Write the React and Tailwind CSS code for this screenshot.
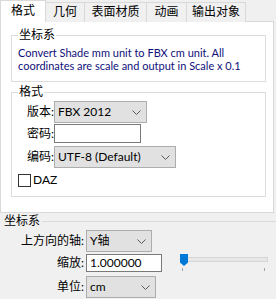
import React from 'react'

function Chevron() {
  return (
    <svg width="9" height="5" viewBox="0 0 9 5" className="shrink-0">
      <path d="M0.5 0.5 L4.5 4.5 L8.5 0.5" fill="none" stroke="#5a5a5a" strokeWidth="1" />
    </svg>
  )
}

function Select({ value, className }) {
  return (
    <div className={`flex items-center justify-between bg-[#e1e1e1] border border-[#adadad] pl-[3px] pr-[5px] ${className}`}>
      <span>{value}</span>
      <Chevron />
    </div>
  )
}

function Slider() {
  return (
    <div className="relative w-[88px] h-[20px] ml-[16px]">
      <div className="absolute left-0 right-0 top-[4px] h-[5px] bg-[#e7e7e7] border border-[#d6d6d6]" />
      <svg width="8" height="12" viewBox="0 0 8 12" className="absolute left-[0px] top-[1px]">
        <path d="M0 0 H8 V8.5 L4 12 L0 8.5 Z" fill="#0078d7" />
      </svg>
      <div className="absolute left-[2px] top-[15px] w-px h-[3px] bg-[#a0a0a0]" />
      <div className="absolute left-[84px] top-[15px] w-px h-[3px] bg-[#a0a0a0]" />
    </div>
  )
}

const tabs = [
  { label: '几何', w: 'w-[39px]' },
  { label: '表面材质', w: 'w-[62px]' },
  { label: '动画', w: 'w-[40px]' },
  { label: '输出对象', w: 'w-[59px]' },
]

export default function App() {
  return (
    <div className="w-[276px] h-[299px] bg-[#f0f0f0] overflow-hidden text-[12px] leading-[16px] text-black font-['Lato','Noto_Sans_CJK_SC',sans-serif]">
      {/* Tabs */}
      <div className="flex items-end h-[22px]">
        <div className="relative z-10 w-[46px] h-[22px] bg-white border border-b-0 border-[#d9d9d9] flex justify-center pt-[2px]">
          格式
        </div>
        {tabs.map(t => (
          <div key={t.label} className={`${t.w} h-[20px] border-t border-r border-[#d9d9d9] bg-[#f0f0f0] flex justify-center pt-[1px]`}>
            {t.label}
          </div>
        ))}
      </div>

      {/* Tab panel */}
      <div className="w-[274px] h-[192px] -mt-px bg-white border border-[#d9d9d9] pt-[5px] pl-[10px]">
        <fieldset className="w-[255px] border border-[#dcdcdc] px-[6px] pb-[9px]">
          <legend className="px-[1px]">坐标系</legend>
          <p className="mt-[3px] text-[11px] leading-[13px] text-[#10107a] whitespace-nowrap">
            Convert Shade mm unit to FBX cm unit. All<br />
            coordinates are scale and output in Scale x 0.1
          </p>
        </fieldset>

        <fieldset className="mt-[2px] w-[255px] h-[113px] border border-[#dcdcdc] px-[6px]">
          <legend className="px-[1px]">格式</legend>
          <div className="mt-[1px] flex items-center">
            <span className="w-[36px] text-right">版本:</span>
            <Select value="FBX 2012" className="w-[93px] h-[22px]" />
          </div>
          <div className="mt-[1px] flex items-center">
            <span className="w-[36px] text-right">密码:</span>
            <div className="w-[87px] h-[19px] bg-white border border-[#7a7a7a]" />
          </div>
          <div className="mt-[3px] flex items-center">
            <span className="w-[36px] text-right">编码:</span>
            <Select value="UTF-8 (Default)" className="w-[122px] h-[22px]" />
          </div>
          <div className="mt-[4px] flex items-center gap-[2px]">
            <div className="w-[13px] h-[13px] border border-[#333333] bg-white" />
            <span>DAZ</span>
          </div>
        </fieldset>
      </div>

      {/* Coordinate section */}
      <div className="flex items-center h-[16px] pl-[4px]">
        <span>坐标系</span>
        <div className="flex-1 ml-[2px] h-px bg-[#dadada]" />
      </div>
      <div className="flex flex-col">
        <div className="mt-[1px] flex items-center gap-[2px]">
          <span className="w-[84px] text-right">上方向的轴:</span>
          <Select value="Y轴" className="w-[66px] h-[22px]" />
        </div>
        <div className="mt-[1px] flex items-center gap-[2px]">
          <span className="w-[84px] text-right">缩放:</span>
          <div className="w-[76px] h-[18px] bg-white border border-[#7a7a7a] pl-[3px] leading-[16px]">1.000000</div>
          <Slider />
        </div>
        <div className="mt-[3px] flex items-center gap-[2px]">
          <span className="w-[84px] text-right">单位:</span>
          <Select value="cm" className="w-[70px] h-[22px]" />
        </div>
      </div>
    </div>
  )
}
